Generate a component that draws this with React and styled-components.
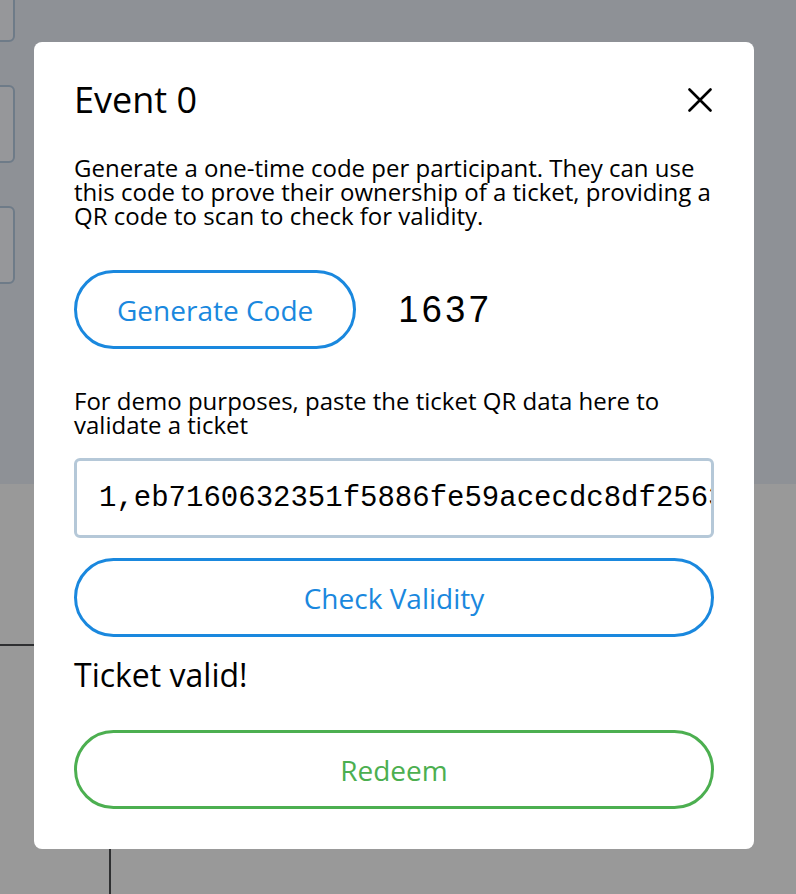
import React, { useState } from 'react'
import styled, { createGlobalStyle, css } from 'styled-components'

const GlobalStyle = createGlobalStyle`
  html, body {
    margin: 0;
    padding: 0;
    height: 100%;
  }
  body {
    font-family: "Open Sans", "Noto Sans", sans-serif;
    color: #000;
  }
`

const TICKET_DATA = '1,eb7160632351f5886fe59acecdc8df2563a9c0e7f1b4d2'

const App = () => {
  const [code] = useState('1637')
  const [ticket, setTicket] = useState(TICKET_DATA)
  return (
    <Page>
      <GlobalStyle />
      <TopArea>
        <CardColumn>
          <BgCard />
          <BgCard />
          <BgCard />
        </CardColumn>
      </TopArea>
      <BottomArea>
        <TableCorner />
      </BottomArea>

      <Modal>
        <Header>
          <Title>Event 0</Title>
          <CloseButton aria-label="Close">
            <svg width="24" height="24" viewBox="0 0 24 24">
              <path d="M1.5 1.5 L22.5 22.5 M22.5 1.5 L1.5 22.5" stroke="#000" strokeWidth="2.6" strokeLinecap="round" />
            </svg>
          </CloseButton>
        </Header>
        <Text $gap={38}>
          Generate a one-time code per participant. They can use this code to prove their ownership of a ticket, providing a QR code to scan to check for validity.
        </Text>
        <CodeRow>
          <PillButton>Generate Code</PillButton>
          <Code>{code}</Code>
        </CodeRow>
        <Text $gap={40}>
          For demo purposes, paste the ticket QR data here to validate a ticket
        </Text>
        <TicketInput value={ticket} onChange={e => setTicket(e.target.value)} />
        <PillButton $full>Check Validity</PillButton>
        <Status>Ticket valid!</Status>
        <PillButton $full $green>Redeem</PillButton>
      </Modal>
    </Page>
  )
}

const Page = styled.div`
  position: relative;
  width: 100%;
  height: 100vh;
  overflow: hidden;
  display: flex;
  flex-direction: column;
  background: #999999;
`

const TopArea = styled.div`
  flex-shrink: 0;
  height: 484px;
  background: #8e9196;
  overflow: hidden;
`

const CardColumn = styled.div`
  width: 215px;
  margin-left: -200px;
  margin-top: -36px;
  display: flex;
  flex-direction: column;
  gap: 43px;
`

const BgCard = styled.div`
  height: 74px;
  border: 2px solid #6e7b88;
  border-radius: 6px;
  background: #96979a;
`

const BottomArea = styled.div`
  flex: 1;
  min-height: 0;
  overflow: hidden;
  padding-top: 160px;
`

const TableCorner = styled.div`
  width: 109px;
  height: 400px;
  border-top: 2px solid #2e2f31;
  border-right: 2px solid #2e2f31;
`

const Modal = styled.div`
  position: absolute;
  left: 34px;
  top: 42px;
  width: 720px;
  box-sizing: border-box;
  padding: 40px;
  background: #fff;
  border-radius: 8px;
  display: flex;
  flex-direction: column;
`

const Header = styled.div`
  display: flex;
  align-items: center;
  justify-content: space-between;
`

const Title = styled.h2`
  margin: 0;
  font-size: 36px;
  line-height: 36px;
  font-weight: 400;
`

const CloseButton = styled.button`
  border: none;
  background: none;
  padding: 0;
  margin-right: 2px;
  display: flex;
  cursor: pointer;
`

const Text = styled.p`
  margin: ${p => p.$gap}px 0 0;
  font-size: 24px;
  line-height: 24px;
`

const CodeRow = styled.div`
  margin-top: 42px;
  display: flex;
  align-items: center;
  gap: 42px;
`

const PillButton = styled.button`
  box-sizing: border-box;
  height: 79px;
  padding: 0 40px;
  border: 3px solid #1a88de;
  border-radius: 40px;
  background: #fff;
  color: #1a88de;
  font-family: "Open Sans", "Noto Sans", sans-serif;
  font-size: 28px;
  cursor: pointer;
  ${p => p.$full && css`
    width: 100%;
    margin-top: 20px;
  `}
  ${p => p.$green && css`
    margin-top: 37px;
    border-color: #4caf50;
    color: #4caf50;
  `}
`

const Code = styled.span`
  font-family: "Liberation Sans", Arial, sans-serif;
  font-size: 36px;
  letter-spacing: 3.5px;
`

const TicketInput = styled.input`
  box-sizing: border-box;
  margin-top: 21px;
  width: 100%;
  height: 80px;
  padding: 0 0 0 22px;
  border: 3px solid #b5c8d8;
  border-radius: 6px;
  font-family: "Liberation Mono", "Courier New", monospace;
  font-size: 29px;
  color: #000;
  outline: none;
`

const Status = styled.div`
  margin-top: 20px;
  font-size: 32px;
  line-height: 36px;
`

export default App
